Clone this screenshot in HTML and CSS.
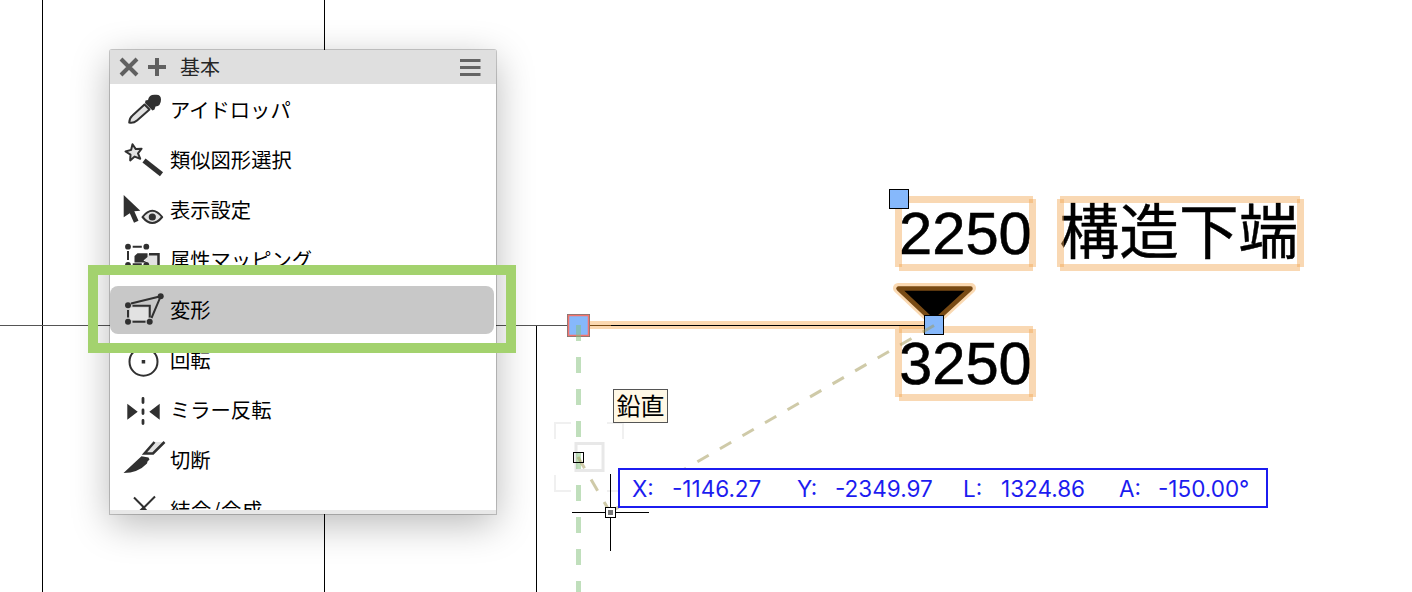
FILE: index.html
```html
<!DOCTYPE html>
<html lang="ja">
<head>
    <meta charset="UTF-8">
    <meta name="viewport" content="width=device-width, initial-scale=1.0">
    <title>基本</title>
    <link rel="stylesheet" href="styles.css">
</head>
<body>
    <div class="workspace">
        <!-- Drawing canvas -->
        <svg class="canvas" width="1412" height="592" viewBox="0 0 1412 592">
            <g class="wall">
                <path d="M42.5 0V592M324.5 0V592M536.5 325V592"/>
                <path class="wall-soft" d="M0 325.5H568"/>
            </g>

            <!-- Level marker -->
            <path class="glow-line" d="M590 325H925"/>
            <path class="marker-glow" d="M898 288H971L934 322Z"/>
            <path class="marker" d="M898.5 288.5H970.5L934 322Z"/>
            <path class="level-brown" d="M590 325.5H611"/>
            <path class="level" d="M611 325.5H925"/>

            <text class="dim" x="899" y="253.5">2250</text>
            <text class="dim" x="899" y="383.5">3250</text>
            <text class="dim-label" x="1059.5" y="253.5">構造下端</text>

            <g class="frame">
                <path d="M899 199.5H1033"/><path d="M899 267.5H1033"/>
                <path d="M898.5 199V267"/><path d="M1032.5 199V267"/>
                <path d="M1060 199.5H1300"/><path d="M1060 267.5H1300"/>
                <path d="M1060.5 199V267"/><path d="M1300.5 199V267"/>
                <path d="M899 329.5H1033"/><path d="M899 397.5H1033"/>
                <path d="M898.5 329V397"/><path d="M1032.5 329V397"/>
            </g>

            <!-- Handles -->
            <rect class="handle" x="889.5" y="189.5" width="19" height="19"/>
            <rect class="handle" x="924.5" y="315.5" width="19" height="19"/>
            <rect class="handle-outer" x="567.5" y="314.5" width="22" height="22"/>
            <rect class="handle-active" x="568.5" y="315.5" width="20" height="20"/>

            <!-- Snap guides -->
            <g class="snap-corner">
                <path d="M555 439V423H571M607 423H623V439M555 475V491H571M607 491H623V475"/>
            </g>
            <rect class="snap-box" x="576" y="443.5" width="27" height="27"/>
            <path class="guide-vertical" d="M578.5 325V592"/>
            <path class="guide-angle" d="M934 325.5L610 512"/>
            <path class="guide-angle" d="M578 457L610 512"/>
            <rect class="snap-point" x="573.5" y="452.5" width="10" height="10"/>

            <!-- Cursor -->
            <path class="cross" d="M610.5 474V551M572 512.5H649"/>
            <rect class="cross-box" x="605.5" y="507.5" width="10" height="10"/>
            <rect class="cross-dot" x="608" y="510" width="5" height="5"/>
        </svg>

        <div class="tooltip">鉛直</div>

        <div class="readout">
            <span>X:</span><span>-1146.27</span>
            <span>Y:</span><span>-2349.97</span>
            <span>L:</span><span>1324.86</span>
            <span>A:</span><span>-150.00°</span>
        </div>

        <!-- Tool palette -->
        <div class="palette">
            <div class="palette-header">
                <svg class="header-icon" width="20" height="20" viewBox="0 0 20 20"><path d="M2 2L18 18M18 2L2 18"/></svg>
                <svg class="header-icon" width="20" height="20" viewBox="0 0 20 20"><path d="M10 1V19M1 10H19"/></svg>
                <h1 class="palette-title">基本</h1>
                <svg class="menu-icon" width="21" height="18" viewBox="0 0 21 18"><path d="M0 2.5H20.5M0 9.5H20.5M0 16.5H20.5"/></svg>
            </div>
            <ul class="tool-list">
                <li class="tool">
                    <svg class="tool-icon" viewBox="0 0 48 48">
                        <path class="shade" d="M9.2 36.6Q9.5 32 12.5 29.5L24.5 18.5L29.5 23.5L17 34.5Q13.500 37.500 9.2 36.600Z"/>
                        <path class="solid" d="M25.5 14.5L28 14Q29 8.5 35 8.8Q41 8 41 13.5Q41 20 35.500 20.500L34.500 23.500L32.500 24.500L25 17Z"/>
                    </svg>
                    <span>アイドロッパ</span>
                </li>
                <li class="tool">
                    <svg class="tool-icon" viewBox="0 0 48 48">
                        <path class="shade" d="M12.5 8.2L15.8 13.1L21.6 12.7L18 17.3L20.2 22.7L14.7 20.6L10.2 24.4L10.5 18.6L5.5 15.5L11.1 13.9Z"/>
                        <path class="wand" d="M24 24.500L41.500 38.200"/>
                    </svg>
                    <span>類似図形選択</span>
                </li>
                <li class="tool">
                    <svg class="tool-icon" viewBox="0 0 48 48">
                        <path class="solid" d="M3.7 9L20.3 24.7L14.3 25.3L18.5 34.8L14 36.8L9.8 27.3L3.7 31.3Z"/>
                        <path class="shade" d="M22.5 31Q32.3 18.5 42.2 31Q32.3 43 22.5 31Z"/>
                        <circle class="solid" cx="32.3" cy="31" r="3.6"/>
                    </svg>
                    <span>表示設定</span>
                </li>
                <li class="tool">
                    <svg class="tool-icon" viewBox="0 0 48 48">
                        <path class="fill" d="M25 18H38.5V34H25Z"/>
                        <path class="attribute-box" d="M29 18.300H38.500V34"/>
                        <path class="solid" d="M14.5 20L17.500 17.3H27.5V21L23.500 24.500L27 26.500H14.5Z"/>
                        <path class="line" d="M12.7 10.7H21.8M8 15V24M12.7 28.3H21.8"/>
                        <circle class="solid" cx="8" cy="10.7" r="2.9"/>
                        <circle class="solid" cx="26.3" cy="10.7" r="2.9"/>
                        <circle class="solid" cx="8" cy="28.8" r="2.9"/>
                        <circle class="solid" cx="26.3" cy="28.8" r="2.9"/>
                    </svg>
                    <span>属性マッピング</span>
                </li>
                <li class="tool selected">
                    <svg class="tool-icon" viewBox="0 0 48 48">
                        <rect class="fill" x="10" y="21.5" width="18" height="12.5"/>
                        <path class="line" d="M12.5 19.8H29.8V31.5M8 24V31.5M12.5 35.7H25.5M11 17.5L40.7 10.3L31.5 32"/>
                        <circle class="solid" cx="8" cy="19.3" r="3"/>
                        <circle class="solid" cx="8" cy="35.7" r="3"/>
                        <circle class="solid" cx="29.7" cy="35.7" r="3"/>
                        <circle class="solid" cx="40.7" cy="10.3" r="3"/>
                    </svg>
                    <span>変形</span>
                </li>
                <li class="tool">
                    <svg class="tool-icon" viewBox="0 0 48 48">
                        <circle class="line" cx="23.5" cy="25.7" r="14"/>
                        <rect class="solid" x="21.7" y="24" width="3.5" height="3.5"/>
                    </svg>
                    <span>回転</span>
                </li>
                <li class="tool">
                    <svg class="tool-icon" viewBox="0 0 48 48">
                        <path class="solid" d="M7.3 17.7L17.7 25.7L7.3 33.7ZM39.7 17.7L29.3 25.7L39.7 33.7Z"/>
                        <path class="mirror-axis" d="M23 12.5V16.5M23 24V27.5M23 34.5V37.5"/>
                    </svg>
                    <span>ミラー反転</span>
                </li>
                <li class="tool">
                    <svg class="tool-icon" viewBox="0 0 48 48">
                        <path class="fill" d="M35 6H45L34 17.500H25Z"/>
                        <path class="knife-handle" d="M34.500 6L24.500 17.500H33L44.500 6"/>
                        <path class="solid" d="M21.5 20.2L28.500 21.500L29.5 23.500L27.5 25.5L27 27.500Q18 37 3.5 37Q13 28 21.5 20.2Z"/>
                    </svg>
                    <span>切断</span>
                </li>
                <li class="tool">
                    <svg class="tool-icon" viewBox="0 0 48 48">
                        <path class="line" d="M14 11.5L24 21.5L35 10.5"/>
                        <path class="solid" d="M23.5 20L29 26H17.5Z"/>
                    </svg>
                    <span class="wide">結合/合成</span>
                </li>
            </ul>
            <div class="palette-footer"></div>
        </div>

        <div class="highlight"></div>
    </div>
</body>
</html>
```
FILE: styles.css
```css
* {
    margin: 0;
    padding: 0;
    box-sizing: border-box;
}

body {
    background: #ffffff;
    color: #000000;
    font-family: "Noto Sans CJK JP", "Noto Sans", sans-serif;
    overflow: hidden;
}

.workspace {
    position: relative;
    width: 1412px;
    height: 592px;
    overflow: hidden;
}

.canvas {
    display: block;
}

.canvas path,
.canvas rect {
    fill: none;
}

.wall path,
.canvas .level,
.canvas .cross {
    stroke: #000000;
    stroke-width: 1;
}

.wall .wall-soft {
    stroke: #555555;
}

.canvas .glow-line {
    stroke: #fcd8b0;
    stroke-width: 8;
}

.canvas .level-brown {
    stroke: #784a14;
}

.canvas .marker-glow {
    stroke: #fad9b2;
    stroke-width: 10;
    stroke-linejoin: round;
}

.canvas .marker {
    fill: #000000;
    stroke: #784a14;
    stroke-width: 4.5;
    stroke-linejoin: round;
}

.dim {
    font-family: "Liberation Sans", Arial, sans-serif;
    font-size: 59.7px;
    stroke: #000000;
    stroke-width: 0.6px;
}

.dim-label {
    font-size: 59.7px;
    stroke: #000000;
    stroke-width: 0.4px;
}

.frame path {
    stroke: rgba(240, 165, 79, 0.43);
    stroke-width: 7;
}

.canvas .handle {
    fill: #86b8fb;
    stroke: #000000;
}

.canvas .handle-outer {
    stroke: #777777;
}

.canvas .handle-active {
    fill: #86b8fb;
    stroke: #f4736c;
    stroke-width: 1.5;
}

.snap-corner path {
    stroke: #f0f0f0;
    stroke-width: 2;
}

.canvas .snap-box {
    stroke: #e8e8e8;
    stroke-width: 3;
}

.canvas .guide-vertical {
    stroke: rgba(130, 192, 122, 0.5);
    stroke-width: 5;
    stroke-dasharray: 16 16;
}

.canvas .guide-angle {
    stroke: rgba(160, 150, 82, 0.5);
    stroke-width: 3;
    stroke-dasharray: 13 13;
}

.canvas .snap-point {
    stroke: #000000;
}

.canvas .cross-box {
    fill: #ffffff;
    stroke: #000000;
}

.canvas .cross-dot {
    fill: #777777;
}

.tooltip {
    position: absolute;
    left: 613px;
    top: 389px;
    width: 55px;
    height: 34px;
    border: 1px solid #555555;
    background: #fff8e6;
    font-size: 24px;
    line-height: 30px;
    text-align: center;
}

.readout {
    position: absolute;
    left: 618px;
    top: 468px;
    width: 650px;
    height: 40px;
    padding-left: 12px;
    display: grid;
    grid-template-columns: 40px 125px 38px 128px 38px 118px 39px 1fr;
    align-items: center;
    border: 2px solid #1c1cf0;
    background: #ffffff;
    color: #1c1cf0;
    font-family: Inter, sans-serif;
    font-size: 22.5px;
    white-space: nowrap;
}

/* Palette */
.palette {
    position: absolute;
    left: 110px;
    top: 50px;
    width: 386px;
    height: 464px;
    display: flex;
    flex-direction: column;
    background: #ffffff;
    border-radius: 2px 2px 0 0;
    box-shadow: 0 0 0 1px rgba(0, 0, 0, 0.2), 0 10px 38px rgba(0, 0, 0, 0.28);
}

.palette-header {
    flex: none;
    display: flex;
    align-items: center;
    gap: 8px;
    height: 34px;
    padding: 0 15px 0 9px;
    background: #dfdfdf;
}

.header-icon path {
    stroke: #606060;
    stroke-width: 4;
}

.menu-icon path {
    stroke: #646464;
    stroke-width: 3;
}

.palette-title {
    margin-left: 5px;
    font-size: 20px;
    font-weight: 400;
    line-height: 34px;
    color: #262626;
}

.menu-icon {
    margin-left: auto;
}

.tool-list {
    flex: 1;
    min-height: 0;
    display: flex;
    flex-direction: column;
    gap: 2px;
    padding: 2px 2px 0 0;
    overflow: hidden;
    list-style: none;
}

.tool {
    flex: none;
    display: flex;
    align-items: center;
    gap: 2px;
    height: 48px;
    padding-left: 10px;
    border-radius: 8px;
    font-size: 20.3px;
    line-height: 46px;
    white-space: nowrap;
}

.tool span {
    height: 48px;
}

.tool .wide {
    letter-spacing: 0.8px;
}

.tool.selected {
    background: #c8c8c8;
}

.tool-icon {
    flex: none;
    width: 48px;
    height: 48px;
}

.palette-footer {
    flex: none;
    height: 4px;
    background: #e8e8e8;
}

.solid {
    fill: #303030;
}

.fill {
    fill: #e2e2e2;
}

.shade {
    fill: #e2e2e2;
    stroke: #303030;
    stroke-width: 2;
    stroke-linejoin: round;
}

.line {
    fill: none;
    stroke: #303030;
    stroke-width: 2;
}

.attribute-box,
.knife-handle {
    fill: none;
    stroke: #303030;
    stroke-width: 2.5;
}

.wand {
    stroke: #303030;
    stroke-width: 5;
}

.mirror-axis {
    stroke: #303030;
    stroke-width: 2.8;
    stroke-linecap: round;
}

.highlight {
    position: absolute;
    left: 88px;
    top: 265px;
    width: 428px;
    height: 88px;
    border: 10px solid #a3d26e;
}
```
